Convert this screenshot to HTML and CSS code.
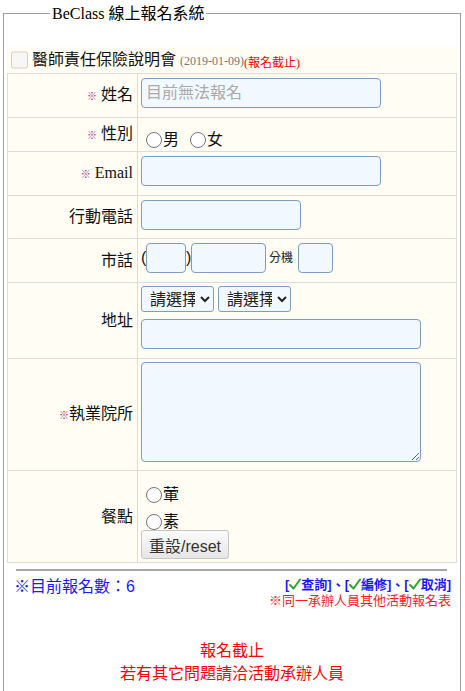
FILE: index.html
```html
<!DOCTYPE html>
<html lang="zh-Hant">
<head>
<meta charset="utf-8">
<title>BeClass 線上報名系統</title>
<link rel="stylesheet" href="styles.css">
</head>
<body>
<fieldset class="frame">
  <legend class="title">BeClass 線上報名系統</legend>
  <div class="form-wrap">
    <div class="event">
      <input type="checkbox" class="event-check" disabled>
      <span class="event-name">醫師責任保險說明會</span>
      <span class="event-date">(2019-01-09)</span><span class="event-status">(報名截止)</span>
    </div>
    <table class="form-table">
      <tr>
        <th class="label"><span class="req">※</span> 姓名</th>
        <td class="field"><input class="txt w240" type="text" placeholder="目前無法報名"></td>
      </tr>
      <tr>
        <th class="label"><span class="req">※</span> 性別</th>
        <td class="field field-radio">
          <div class="radios">
            <label class="opt"><input type="radio" name="sex" class="radio">男</label>
            <label class="opt opt-gap"><input type="radio" name="sex" class="radio">女</label>
          </div>
        </td>
      </tr>
      <tr>
        <th class="label label-serif"><span class="req">※</span> Email</th>
        <td class="field"><input class="txt w240" type="text"></td>
      </tr>
      <tr>
        <th class="label">行動電話</th>
        <td class="field field-short"><input class="txt w160" type="text"></td>
      </tr>
      <tr>
        <th class="label">市話</th>
        <td class="field">
          <div class="phone"><span class="paren">(</span><input class="txt w40" type="text"><span class="paren">)</span><input class="txt w75" type="text"><span class="ext">分機</span><input class="txt w35" type="text"></div>
        </td>
      </tr>
      <tr>
        <th class="label">地址</th>
        <td class="field field-addr">
          <div class="selects">
            <select class="sel"><option>請選擇</option></select>
            <select class="sel"><option>請選擇</option></select>
          </div>
          <input class="txt w280" type="text">
        </td>
      </tr>
      <tr>
        <th class="label"><span class="req">※</span>執業院所</th>
        <td class="field field-area"><textarea class="area"></textarea></td>
      </tr>
      <tr>
        <th class="label">餐點</th>
        <td class="field field-meal">
          <div class="meal">
            <label class="opt"><input type="radio" name="meal" class="radio">葷</label>
            <label class="opt opt-second"><input type="radio" name="meal" class="radio">素</label>
            <button type="button" class="reset">重設/reset</button>
          </div>
        </td>
      </tr>
    </table>
  </div>
  <hr class="rule">
  <div class="stats">
    <div class="count">※目前報名數：6</div>
    <div class="links">
      <div class="actions">[<svg class="chk" viewBox="0 0 12 12"><path d="M1 7 L4.5 10.5 L11 1.5" fill="none" stroke="#2ca52c" stroke-width="2" stroke-linecap="round" stroke-linejoin="round"/></svg>查詢]、[<svg class="chk" viewBox="0 0 12 12"><path d="M1 7 L4.5 10.5 L11 1.5" fill="none" stroke="#2ca52c" stroke-width="2" stroke-linecap="round" stroke-linejoin="round"/></svg>編修]、[<svg class="chk" viewBox="0 0 12 12"><path d="M1 7 L4.5 10.5 L11 1.5" fill="none" stroke="#2ca52c" stroke-width="2" stroke-linecap="round" stroke-linejoin="round"/></svg>取消]</div>
      <div class="other">※同一承辦人員其他活動報名表</div>
    </div>
  </div>
  <div class="notice">
    <div>報名截止</div>
    <div>若有其它問題請洽活動承辦人員</div>
  </div>
</fieldset>
</body>
</html>
```
FILE: styles.css
```css
html, body {
  margin: 0;
  padding: 0;
  background: #ffffff;
}
body {
  font-family: "Liberation Serif", "Noto Sans CJK TC", serif;
  font-size: 16px;
  color: #000;
}
.frame {
  margin: 0 4px 0 3px;
  padding: 20px 3px 40px 3px;
  border: 1px solid #a0a0a0;
  min-width: 0;
}
.title {
  margin-left: 43px;
  padding: 0 2px;
  font-size: 16px;
  line-height: 27px;
}
.form-wrap {
  background: #fffdf4;
}
.event {
  display: flex;
  align-items: center;
  height: 26px;
  font-family: "Liberation Sans", "Noto Sans CJK TC", sans-serif;
}
.event-check {
  width: 17px;
  height: 18px;
  margin: 0 4px 0 4px;
}
.event-name {
  font-size: 16px;
  line-height: 20px;
  color: #111;
}
.event-date {
  margin-left: 4px;
  font-family: "Liberation Serif", "Noto Sans CJK TC", serif;
  font-size: 12px;
  color: #777;
  padding-top: 3px;
}
.event-status {
  font-family: "Liberation Serif", "Noto Sans CJK TC", serif;
  font-size: 12px;
  color: #ff0000;
  padding-top: 3px;
}
.form-table {
  width: 100%;
  border-collapse: collapse;
  background: #fffdf4;
}
.form-table th,
.form-table td {
  border: 1px solid #dcdcdc;
}
.label {
  width: 125px;
  padding: 0 4px 0 0;
  text-align: right;
  vertical-align: middle;
  font-weight: normal;
  font-size: 16px;
  line-height: 22px;
  white-space: nowrap;
  color: #111;
}
.req {
  font-size: 10px;
  color: #a8288f;
}
.field {
  padding: 4px 3px 9px 3px;
  vertical-align: top;
}
.field-short {
  padding-bottom: 8px;
}
.txt {
  display: block;
  box-sizing: border-box;
  height: 30px;
  margin: 0;
  padding: 0 4px;
  border: 1px solid #7f9dc1;
  border-radius: 4px;
  background: #f2f8ff;
  font-family: "Liberation Sans", "Noto Sans CJK TC", sans-serif;
  font-size: 16px;
  color: #222;
}
.txt::placeholder {
  color: #aaaaaa;
}
.w240 { width: 240px; }
.w160 { width: 160px; }
.w280 { width: 280px; }
.w40 { width: 40px; }
.w75 { width: 75px; }
.w35 { width: 35px; }
.field-radio {
  padding: 14px 3px 3px 3px;
}
.radios {
  display: flex;
  align-items: center;
  height: 16px;
}
.opt {
  display: flex;
  align-items: center;
  height: 16px;
  font-family: "Liberation Sans", "Noto Sans CJK TC", sans-serif;
  font-size: 16px;
  line-height: 16px;
  color: #111;
}
.opt-gap {
  margin-left: 6px;
}
.radio {
  width: 16px;
  height: 16px;
  margin: 0 1px 0 5px;
}
.phone {
  display: flex;
  align-items: center;
  font-family: "Liberation Sans", "Noto Sans CJK TC", sans-serif;
}
.paren {
  width: 5px;
  font-size: 16px;
  line-height: 20px;
  color: #111;
}
.ext {
  margin: 0 5px 0 3px;
  font-size: 12px;
  line-height: 16px;
  color: #222;
}
.field-addr {
  padding: 3px 3px 9px 3px;
}
.selects {
  display: flex;
  gap: 4px;
  margin-bottom: 7px;
}
.sel {
  box-sizing: border-box;
  width: 73px;
  height: 26px;
  margin: 0;
  padding: 0 2px 0 4px;
  border: 1px solid #7f9dc1;
  border-radius: 3px;
  background-color: #f2f8ff;
  font-family: "Liberation Sans", "Noto Sans CJK TC", sans-serif;
  font-size: 16px;
  color: #222;
}
.field-area {
  padding: 3px 3px 8px 3px;
}
.area {
  display: block;
  box-sizing: border-box;
  width: 280px;
  height: 100px;
  margin: 0;
  border: 1px solid #7f9dc1;
  border-radius: 4px;
  background: #f2f8ff;
}
.field-meal {
  padding: 16px 3px 3px 3px;
}
.meal {
  display: flex;
  flex-direction: column;
  align-items: flex-start;
}
.opt-second {
  margin-top: 11px;
}
.reset {
  display: block;
  box-sizing: border-box;
  width: 88px;
  height: 29px;
  margin: 0;
  padding: 0;
  border: 1px solid #c6c6c6;
  border-radius: 3px;
  background: linear-gradient(#fbfbfb, #e6e6e6);
  font-family: "Liberation Sans", "Noto Sans CJK TC", sans-serif;
  font-size: 16px;
  color: #333;
}
.rule {
  margin: 6px 10px 0 9px;
  height: 0;
  border: 0;
  border-top: 2px solid #a8a8a8;
}
.stats {
  display: flex;
  justify-content: space-between;
  align-items: flex-start;
  margin-top: 6px;
  padding: 0 6px 0 7px;
  font-family: "Liberation Sans", "Noto Sans CJK TC", sans-serif;
}
.count {
  font-size: 16px;
  line-height: 20px;
  color: #1a1aff;
}
.links {
  text-align: right;
}
.actions {
  font-size: 13px;
  line-height: 16px;
  font-weight: bold;
  color: #1a1aff;
}
.chk {
  width: 12px;
  height: 12px;
  vertical-align: -1px;
}
.other {
  font-size: 13px;
  line-height: 16px;
  color: #ff1a1a;
}
.notice {
  margin-top: 30px;
  text-align: center;
  font-family: "Liberation Sans", "Noto Sans CJK TC", sans-serif;
  font-size: 16px;
  line-height: 23px;
  color: #ff0000;
}
```
